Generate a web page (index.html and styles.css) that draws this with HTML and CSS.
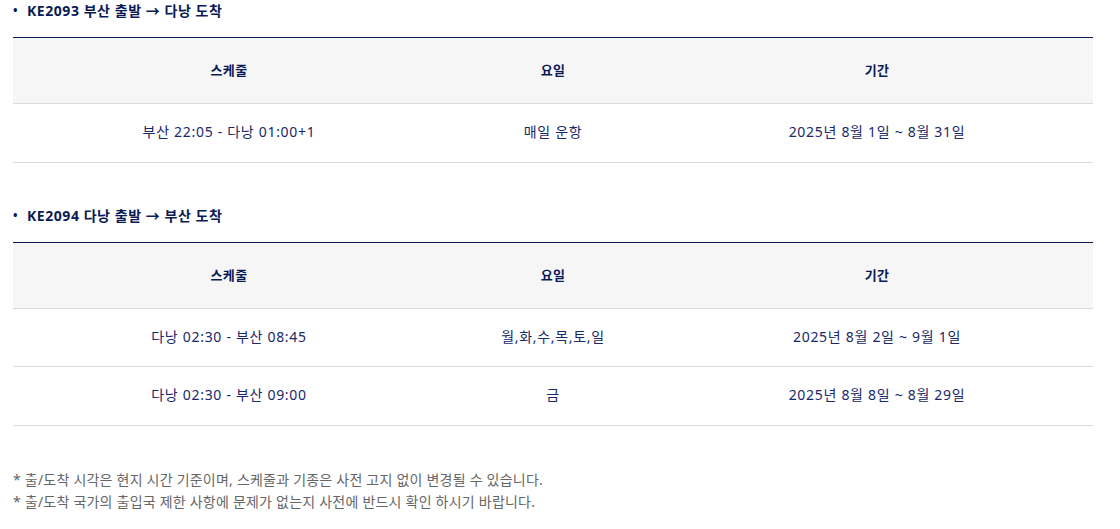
FILE: index.html
```html
<!DOCTYPE html>
<html lang="ko">
<head>
<meta charset="utf-8">
<link rel="stylesheet" href="styles.css">
</head>
<body>
<div class="page">
  <section class="sched">
    <h3 class="sched-title"><span class="dot">•</span>KE2093 부산 출발 → 다낭 도착</h3>
    <table class="tbl">
      <colgroup><col class="c-wide"><col class="c-narrow"><col class="c-wide"></colgroup>
      <thead><tr><th>스케줄</th><th>요일</th><th>기간</th></tr></thead>
      <tbody>
        <tr><td>부산 22:05 - 다낭 01:00+1</td><td>매일 운항</td><td>2025년 8월 1일 ~ 8월 31일</td></tr>
      </tbody>
    </table>
  </section>
  <section class="sched second">
    <h3 class="sched-title"><span class="dot">•</span>KE2094 다낭 출발 → 부산 도착</h3>
    <table class="tbl">
      <colgroup><col class="c-wide"><col class="c-narrow"><col class="c-wide"></colgroup>
      <thead><tr><th>스케줄</th><th>요일</th><th>기간</th></tr></thead>
      <tbody>
        <tr><td>다낭 02:30 - 부산 08:45</td><td>월,화,수,목,토,일</td><td>2025년 8월 2일 ~ 9월 1일</td></tr>
        <tr><td>다낭 02:30 - 부산 09:00</td><td>금</td><td>2025년 8월 8일 ~ 8월 29일</td></tr>
      </tbody>
    </table>
  </section>
  <ul class="notes">
    <li>* 출/도착 시각은 현지 시간 기준이며, 스케줄과 기종은 사전 고지 없이 변경될 수 있습니다.</li>
    <li>* 출/도착 국가의 출입국 제한 사항에 문제가 없는지 사전에 반드시 확인 하시기 바랍니다.</li>
  </ul>
</div>
</body>
</html>
```
FILE: styles.css
```css
html, body {
  margin: 0;
  padding: 0;
  background: #fff;
}
body {
  font-family: "Noto Sans", "Noto Sans CJK KR", sans-serif;
  color: #0e1d5c;
}
.page {
  padding: 0 27px 0 13px;
}
.sched-title {
  margin: 0;
  height: 22px;
  line-height: 22px;
  font-size: 14px;
  font-weight: 700;
  letter-spacing: 0.55px;
  color: #0a1a55;
  display: flex;
  align-items: center;
}
.dot {
  width: 14px;
  font-size: 12px;
  letter-spacing: 0;
}
.sched .tbl {
  margin-top: 15px;
}
.second {
  margin-top: 42px;
}
.tbl {
  width: 100%;
  border-collapse: collapse;
  border-top: 1px solid #0c1a5a;
  table-layout: fixed;
}
.c-wide { width: 40%; }
.c-narrow { width: 20%; }
.tbl th {
  background: #f6f6f6;
  height: 63px;
  padding: 0 0 2px;
  font-size: 13px;
  font-weight: 700;
  letter-spacing: 0.3px;
  color: #0a1a55;
  border-bottom: 1px solid #dcdcdc;
  text-align: center;
}
.tbl td {
  height: 54.5px;
  padding: 0 0 3px;
  font-size: 14px;
  letter-spacing: 0.7px;
  color: #18286a;
  border-bottom: 1px solid #dcdcdc;
  text-align: center;
}
.notes {
  list-style: none;
  margin: 43px 0 0;
  padding: 0;
  font-size: 14px;
  line-height: 22px;
  letter-spacing: 0.22px;
  color: #666;
}
```
